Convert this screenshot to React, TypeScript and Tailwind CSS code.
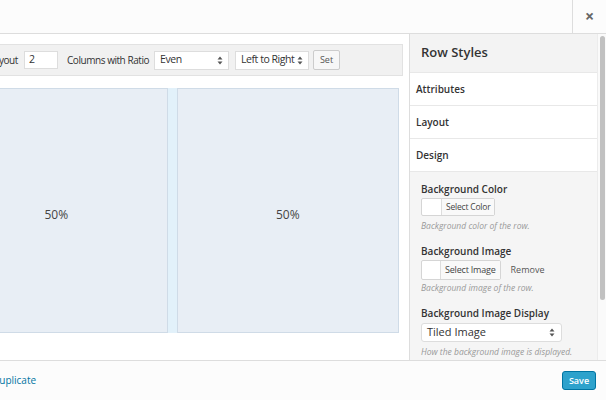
import React from "react";

function Arrows() {
  return (
    <svg width="6" height="9" viewBox="0 0 6 9" className="shrink-0">
      <path d="M3 0.5 L5.5 3.5 H0.5 Z" fill="#555" />
      <path d="M3 8.5 L5.5 5.5 H0.5 Z" fill="#555" />
    </svg>
  );
}

export default function App() {
  return (
    <div
      className="w-[606px] h-[400px] overflow-hidden bg-white flex flex-col text-[#333]"
      style={{ fontFamily: '"Open Sans", "Liberation Sans", sans-serif' }}
    >
      {/* Top bar */}
      <div className="h-[34px] shrink-0 flex bg-[#fcfcfc] border-b border-[#dddddd]">
        <div className="flex-1" />
        <div className="w-[34px] border-l border-[#dddddd] flex items-center justify-center text-[#666] text-[16px] font-bold leading-none pb-[1px]">
          ×
        </div>
      </div>

      {/* Main */}
      <div className="flex-1 flex min-h-0">
        {/* Left */}
        <div className="w-[409px] shrink-0 overflow-hidden pt-[10px]">
          <div className="ml-[-58px] w-[461px] flex flex-col">
            <div className="h-[32px] bg-[#f1f1f1] border border-[#e2e2e2] flex items-center text-[10px] tracking-[-0.45px] text-[#333] whitespace-nowrap">
              <span className="ml-[46px] w-[28px] shrink-0">Layout</span>
              <div className="ml-[7px] w-[34px] h-[18px] shrink-0 bg-white border border-[#dddddd] flex items-center px-[4px] text-[10.5px]">
                2
              </div>
              <span className="ml-[9px] w-[80px] shrink-0">Columns with Ratio</span>
              <div className="ml-[7px] w-[75px] h-[19px] shrink-0 bg-white border border-[#dddddd] flex items-center justify-between pl-[5px] pr-[5px] text-[10.5px]">
                <span>Even</span>
                <Arrows />
              </div>
              <div className="ml-[6px] w-[74px] h-[19px] shrink-0 bg-white border border-[#dddddd] flex items-center justify-between pl-[5px] pr-[5px] text-[10.5px]">
                <span>Left to Right</span>
                <Arrows />
              </div>
              <div className="ml-[4px] w-[27px] h-[20px] shrink-0 bg-[#f7f7f7] border border-[#cccccc] rounded-[2px] flex items-center justify-center text-[9px] tracking-normal text-[#555]">
                Set
              </div>
            </div>
            <div className="mt-[12px] ml-[3px] w-[454px] h-[245px] flex">
              <div className="w-[223px] pt-[8px] bg-[#e8eef5] border border-[#cfdbe7] flex items-center justify-center text-[12px] text-[#444]">
                50%
              </div>
              <div className="w-[9px] bg-[#e2f1fa]" />
              <div className="w-[223px] pt-[8px] bg-[#e8eef5] border border-[#cfdbe7] flex items-center justify-center text-[12px] text-[#444]">
                50%
              </div>
            </div>
          </div>
        </div>

        {/* Sidebar */}
        <div className="flex-1 border-l border-[#dddddd] flex min-w-0">
          <div className="flex-1 flex flex-col min-w-0 overflow-hidden">
            <div className="h-[39px] shrink-0 bg-[#f3f3f3] border-b border-[#e8e8e8] flex items-center pl-[11px] text-[13px] font-semibold text-[#333]">
              Row Styles
            </div>
            {["Attributes", "Layout", "Design"].map((t) => (
              <div
                key={t}
                className="h-[33px] shrink-0 bg-white border-b border-[#e8e8e8] flex items-center pl-[6px] text-[10px] font-semibold text-[#333]"
              >
                {t}
              </div>
            ))}
            <div className="flex-1 bg-[#f5f5f5] px-[11px] pt-[10px] flex flex-col text-[10px]">
              <div className="font-semibold text-[#333] leading-[14px]">Background Color</div>
              <div className="mt-[2px] flex items-center">
                <div className="h-[18px] flex border border-[#d5d5d5] rounded-[2px] bg-white">
                  <div className="w-[20px] border-r border-[#dddddd]" />
                  <div className="px-[4px] flex items-center text-[8.5px] tracking-[-0.2px] text-[#444] bg-[#f9f9f9]">Select Color</div>
                </div>
              </div>
              <div className="mt-[4px] italic text-[#999] text-[8.5px] leading-[12px]">Background color of the row.</div>

              <div className="mt-[12px] font-semibold text-[#333] leading-[14px]">Background Image</div>
              <div className="mt-[2px] flex items-center">
                <div className="h-[20px] flex border border-[#d5d5d5] rounded-[2px] bg-white">
                  <div className="w-[19px] border-r border-[#dddddd]" />
                  <div className="px-[4px] flex items-center text-[9px] tracking-[-0.2px] text-[#444] bg-[#f9f9f9]">Select Image</div>
                </div>
                <span className="ml-[10px] text-[9px] text-[#555]">Remove</span>
              </div>
              <div className="mt-[2px] italic text-[#999] text-[8.5px] leading-[12px]">Background image of the row.</div>

              <div className="mt-[12px] font-semibold text-[#333] leading-[14px]">Background Image Display</div>
              <div className="mt-[3px] w-[141px] h-[19px] shrink-0 bg-white border border-[#dddddd] rounded-[3px] flex items-center justify-between pl-[5px] pr-[6px] text-[11px] text-[#333]">
                <span>Tiled Image</span>
                <Arrows />
              </div>
              <div className="mt-[4px] italic text-[#999] text-[8.5px] leading-[12px] whitespace-nowrap">How the background image is displayed.</div>
            </div>
          </div>
          <div className="w-[9px] shrink-0 bg-[#fafafa] border-l border-[#ececec] pt-[2px] flex justify-center">
            <div className="w-[5px] h-[264px] rounded-full bg-[#c1c1c1]" />
          </div>
        </div>
      </div>

      {/* Footer */}
      <div className="h-[40px] shrink-0 bg-[#fcfcfc] border-t border-[#dddddd] flex items-center justify-between overflow-hidden">
        <span className="ml-[-8px] text-[10px] text-[#0074a2]">Duplicate</span>
        <div className="mr-[10px] w-[34px] h-[19px] bg-[#2ea2cc] border border-[#0074a2] rounded-[3px] flex items-center justify-center text-[9px] font-semibold text-white">
          Save
        </div>
      </div>
    </div>
  );
}
